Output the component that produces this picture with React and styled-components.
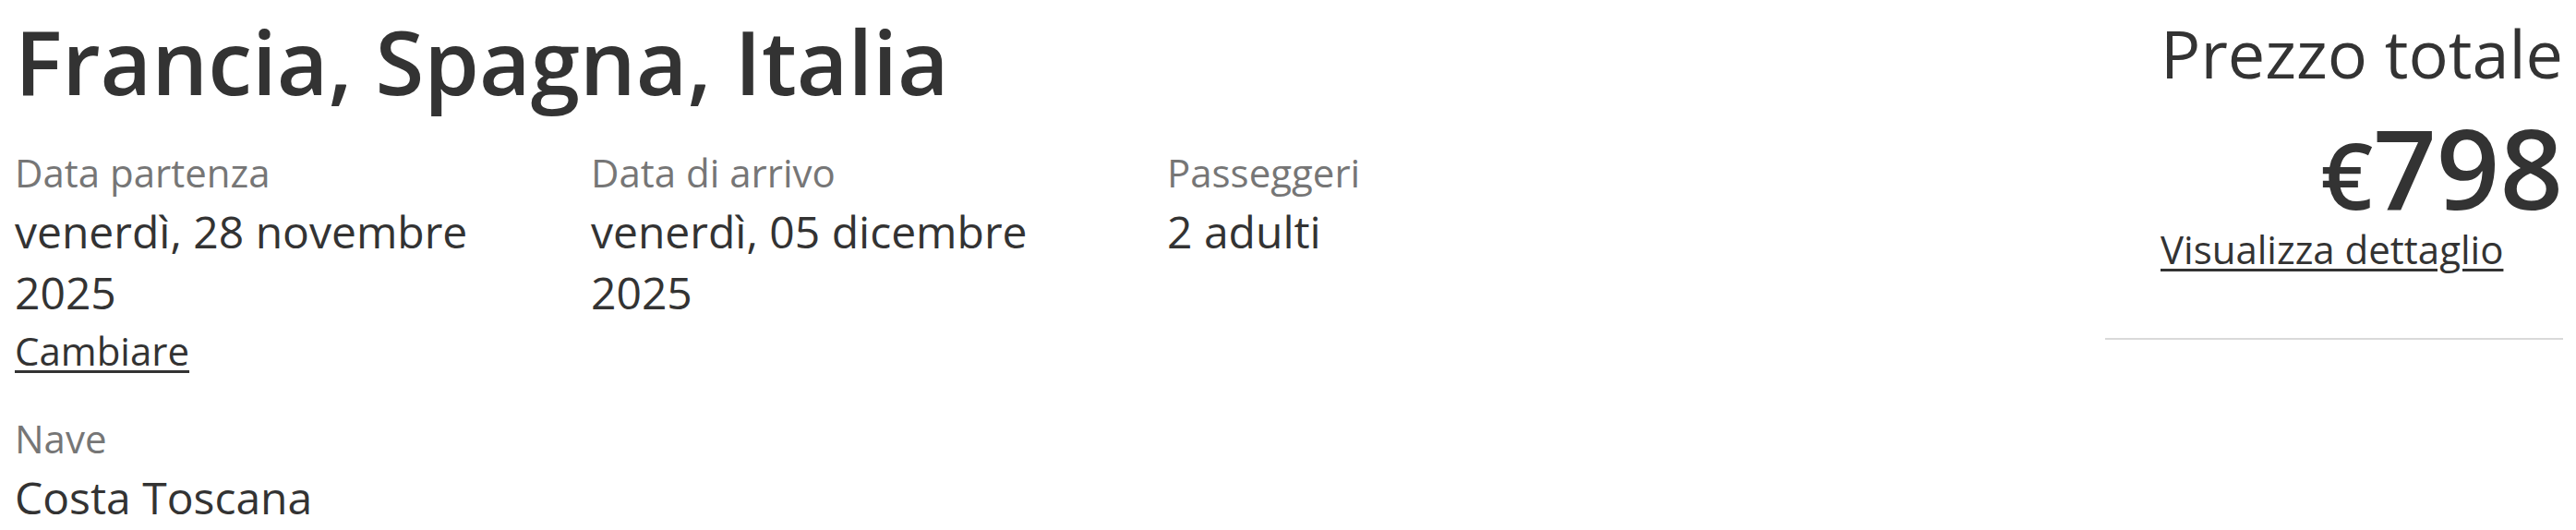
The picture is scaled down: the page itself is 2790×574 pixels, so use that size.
import React from "react";
import styled, { createGlobalStyle } from "styled-components";

const GlobalStyle = createGlobalStyle`
  html, body {
    margin: 0;
    padding: 0;
    background: #ffffff;
  }
  body {
    font-family: "Open Sans", "Noto Sans", sans-serif;
    color: #333333;
  }
`;

const Page = styled.div`
  display: flex;
  justify-content: space-between;
  align-items: flex-start;
  padding: 0 14px 0 16px;
`;

const Main = styled.div`
  flex: 1;
  min-width: 0;
`;

const Title = styled.h1`
  margin: 0;
  font-size: 96px;
  font-weight: 600;
  line-height: normal;
  color: #333333;
`;

const InfoGrid = styled.div`
  display: grid;
  grid-template-columns: repeat(3, 624px);
  row-gap: 38px;
  margin-top: 27px;
`;

const Field = styled.div`
  display: flex;
  flex-direction: column;
  align-items: flex-start;
  padding-right: 40px;
`;

const Label = styled.div`
  font-size: 42px;
  line-height: normal;
  color: #767676;
`;

const Value = styled.div`
  margin-top: 3px;
  font-size: 48px;
  line-height: 66px;
  color: #333333;
`;

const TextLink = styled.a`
  display: inline-block;
  margin-top: ${(p) => (p.$offset ? `${p.$offset}px` : "0")};
  font-size: 42px;
  line-height: normal;
  color: #333333;
  text-decoration: underline;
  text-decoration-thickness: 3px;
  text-underline-offset: 5px;
  cursor: pointer;
`;

const PricePanel = styled.aside`
  width: 496px;
  display: flex;
  flex-direction: column;
  align-items: flex-end;
  padding-top: 8px;
`;

const PriceHeading = styled.div`
  font-size: 72px;
  line-height: normal;
  color: #333333;
`;

const PriceAmount = styled.div`
  margin-top: 15px;
  font-size: 120px;
  font-weight: 600;
  line-height: 1;
  color: #333333;
`;

const Currency = styled.span`
  font-size: 100px;
`;

const DetailLinkRow = styled.div`
  align-self: stretch;
  padding-left: 60px;
`;

const Divider = styled.hr`
  align-self: stretch;
  margin: 68px 0 0;
  border: 0;
  border-top: 2px solid #d9d9d9;
`;

const fields = [
  { label: "Data partenza", value: "venerdì, 28 novembre 2025", link: "Cambiare" },
  { label: "Data di arrivo", value: "venerdì, 05 dicembre 2025" },
  { label: "Passeggeri", value: "2 adulti" },
  { label: "Nave", value: "Costa Toscana" },
];

export default function App() {
  return (
    <>
      <GlobalStyle />
      <Page>
        <Main>
          <Title>Francia, Spagna, Italia</Title>
          <InfoGrid>
            {fields.map((f) => (
              <Field key={f.label}>
                <Label>{f.label}</Label>
                <Value>{f.value}</Value>
                {f.link && <TextLink $offset={1}>{f.link}</TextLink>}
              </Field>
            ))}
          </InfoGrid>
        </Main>
        <PricePanel>
          <PriceHeading>Prezzo totale</PriceHeading>
          <PriceAmount>
            <Currency>€</Currency>798
          </PriceAmount>
          <DetailLinkRow>
            <TextLink>Visualizza dettaglio</TextLink>
          </DetailLinkRow>
          <Divider />
        </PricePanel>
      </Page>
    </>
  );
}
